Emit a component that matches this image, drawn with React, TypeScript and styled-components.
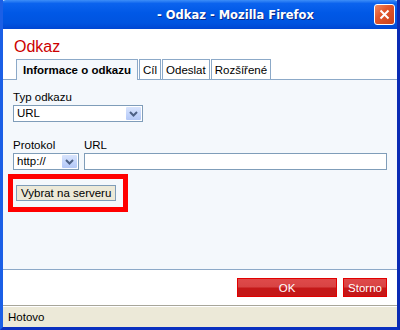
import styled, { createGlobalStyle } from 'styled-components';

const GlobalStyle = createGlobalStyle`
  html, body {
    margin: 0;
    padding: 0;
    background: #fff;
  }
  body {
    font-family: 'Liberation Sans', 'DejaVu Sans', sans-serif;
    font-size: 11.5px;
    color: #000;
  }
`;

const WindowFrame = styled.div`
  width: 400px;
  height: 330px;
  box-sizing: border-box;
  display: flex;
  flex-direction: column;
  border-left: 3px solid #1b5fe6;
  border-right: 3px solid #0a2bb4;
  border-bottom: 3px solid #0a30c0;
  background: #fff;
  overflow: hidden;
`;

const TitleBar = styled.div`
  height: 29px;
  margin: 0 -3px;
  display: flex;
  align-items: center;
  background: linear-gradient(
    to bottom,
    #3d8ef8 0%,
    #0b63ee 12%,
    #0058e6 45%,
    #0054e0 80%,
    #0046d2 100%
  );
  border-radius: 6px 6px 0 0;
`;

const TitleText = styled.div`
  flex: 1;
  padding-left: 157px;
  font-family: 'DejaVu Sans', sans-serif;
  font-weight: bold;
  font-size: 11.5px;
  color: #fff;
  text-shadow: 1px 1px 0 #0a2a8a;
  white-space: nowrap;
`;

const CloseButton = styled.div`
  width: 19px;
  height: 19px;
  margin-right: 5px;
  display: flex;
  align-items: center;
  justify-content: center;
  border: 1px solid #fff;
  border-radius: 3px;
  background: linear-gradient(135deg, #f08a62 0%, #e2572c 40%, #c8421c 100%);
`;

const Heading = styled.div`
  height: 30px;
  padding: 8px 0 0 11px;
  box-sizing: border-box;
  font-family: 'Liberation Sans', sans-serif;
  font-size: 16px;
  line-height: 20px;
  color: #cc0000;
`;

const TabRow = styled.div`
  display: flex;
  gap: 1px;
  padding-left: 13px;
  height: 21px;
  box-sizing: border-box;
  border-bottom: 1px solid #8ca9c8;
`;

const Tab = styled.div<{ $active?: boolean }>`
  height: ${(p) => (p.$active ? '21px' : '20px')};
  box-sizing: border-box;
  padding: 0 ${(p) => (p.$active ? '6px' : '3px')};
  display: flex;
  align-items: center;
  border: 1px solid #8ca9c8;
  border-bottom: none;
  background: ${(p) => (p.$active ? '#f4f8fc' : '#fff')};
  font-weight: ${(p) => (p.$active ? 'bold' : 'normal')};
  margin-bottom: ${(p) => (p.$active ? '-1px' : '0')};
  white-space: nowrap;
`;

const Panel = styled.div`
  height: 190px;
  box-sizing: border-box;
  padding: 11px 10px 0 10px;
  background: #f4f8fc;
  border-bottom: 1px solid #8ca9c8;
`;

const Label = styled.div`
  line-height: 13px;
  height: 13px;
  margin-bottom: 1px;
`;

const Field = styled.div<{ $width: number }>`
  width: ${(p) => p.$width}px;
  height: 17px;
  box-sizing: border-box;
  display: flex;
  align-items: center;
  border: 1px solid #7f9db9;
  background: #fff;
`;

const FieldText = styled.span`
  flex: 1;
  padding-left: 3px;
  line-height: 15px;
`;

const DropButton = styled.div`
  width: 15px;
  height: 13px;
  margin-right: 1px;
  display: flex;
  align-items: center;
  justify-content: center;
  border-radius: 1px;
  background: linear-gradient(to bottom, #d8e4fc 0%, #c1d3fb 60%, #b4c8f6 100%);
`;

const Group = styled.div<{ $top?: number }>`
  margin-top: ${(p) => p.$top ?? 0}px;
`;

const FieldRow = styled.div`
  display: flex;
  gap: 5px;
`;

const Column = styled.div<{ $grow?: boolean }>`
  display: flex;
  flex-direction: column;
  flex: ${(p) => (p.$grow ? 1 : 'none')};
`;

const Highlight = styled.div`
  display: inline-block;
  margin: 4px 0 0 -5px;
  padding: 6px 7px 6px 3px;
  border: 5px solid #ff0000;
`;

const ServerButton = styled.div`
  height: 16px;
  box-sizing: border-box;
  padding: 0 4px;
  display: flex;
  align-items: center;
  justify-content: center;
  border: 1px solid #7f9db9;
  background: #ece9d8;
  white-space: nowrap;
`;

const Footer = styled.div`
  height: 35px;
  display: flex;
  justify-content: flex-end;
  gap: 6px;
  padding: 8px 10px 0 0;
  box-sizing: border-box;
`;

const RedButton = styled.div<{ $width: number }>`
  width: ${(p) => p.$width}px;
  height: 19px;
  box-sizing: border-box;
  display: flex;
  align-items: center;
  justify-content: center;
  border: 1px solid #e20000;
  background: linear-gradient(to bottom, #df4a4a 0%, #d84343 48%, #c41818 52%, #c41818 100%);
  color: #fff;
`;

const StatusBar = styled.div`
  flex: 1;
  display: flex;
  align-items: center;
  padding-left: 5px;
  background: #ece9d8;
  border-top: 1px solid #a7a69a;
  box-shadow: inset 0 1px 0 #fff;
`;

const ChevronIcon = () => (
  <svg width="9" height="6" viewBox="0 0 9 6">
    <path d="M1 1 L4.5 4.5 L8 1" stroke="#4d6185" strokeWidth="2" fill="none" />
  </svg>
);

const CloseIcon = () => (
  <svg width="11" height="11" viewBox="0 0 11 11">
    <path d="M1.5 1.5 L9.5 9.5 M9.5 1.5 L1.5 9.5" stroke="#fff" strokeWidth="2" fill="none" />
  </svg>
);

const tabs = ['Informace o odkazu', 'Cíl', 'Odeslat', 'Rozšířené'];

const App = () => {
  return (
    <>
      <GlobalStyle />
      <WindowFrame>
        <TitleBar>
          <TitleText>- Odkaz - Mozilla Firefox</TitleText>
          <CloseButton>
            <CloseIcon />
          </CloseButton>
        </TitleBar>
        <Heading>Odkaz</Heading>
        <TabRow>
          {tabs.map((t, i) => (
            <Tab key={t} $active={i === 0}>
              {t}
            </Tab>
          ))}
        </TabRow>
        <Panel>
          <Group>
            <Label>Typ odkazu</Label>
            <Field $width={130}>
              <FieldText>URL</FieldText>
              <DropButton>
                <ChevronIcon />
              </DropButton>
            </Field>
          </Group>
          <Group $top={17}>
            <FieldRow>
              <Column>
                <Label>Protokol</Label>
                <Field $width={66}>
                  <FieldText>http://</FieldText>
                  <DropButton>
                    <ChevronIcon />
                  </DropButton>
                </Field>
              </Column>
              <Column $grow>
                <Label>URL</Label>
                <Field $width={303} />
              </Column>
            </FieldRow>
          </Group>
          <Highlight>
            <ServerButton>Vybrat na serveru</ServerButton>
          </Highlight>
        </Panel>
        <Footer>
          <RedButton $width={100}>OK</RedButton>
          <RedButton $width={44}>Storno</RedButton>
        </Footer>
        <StatusBar>Hotovo</StatusBar>
      </WindowFrame>
    </>
  );
};

export default App;
